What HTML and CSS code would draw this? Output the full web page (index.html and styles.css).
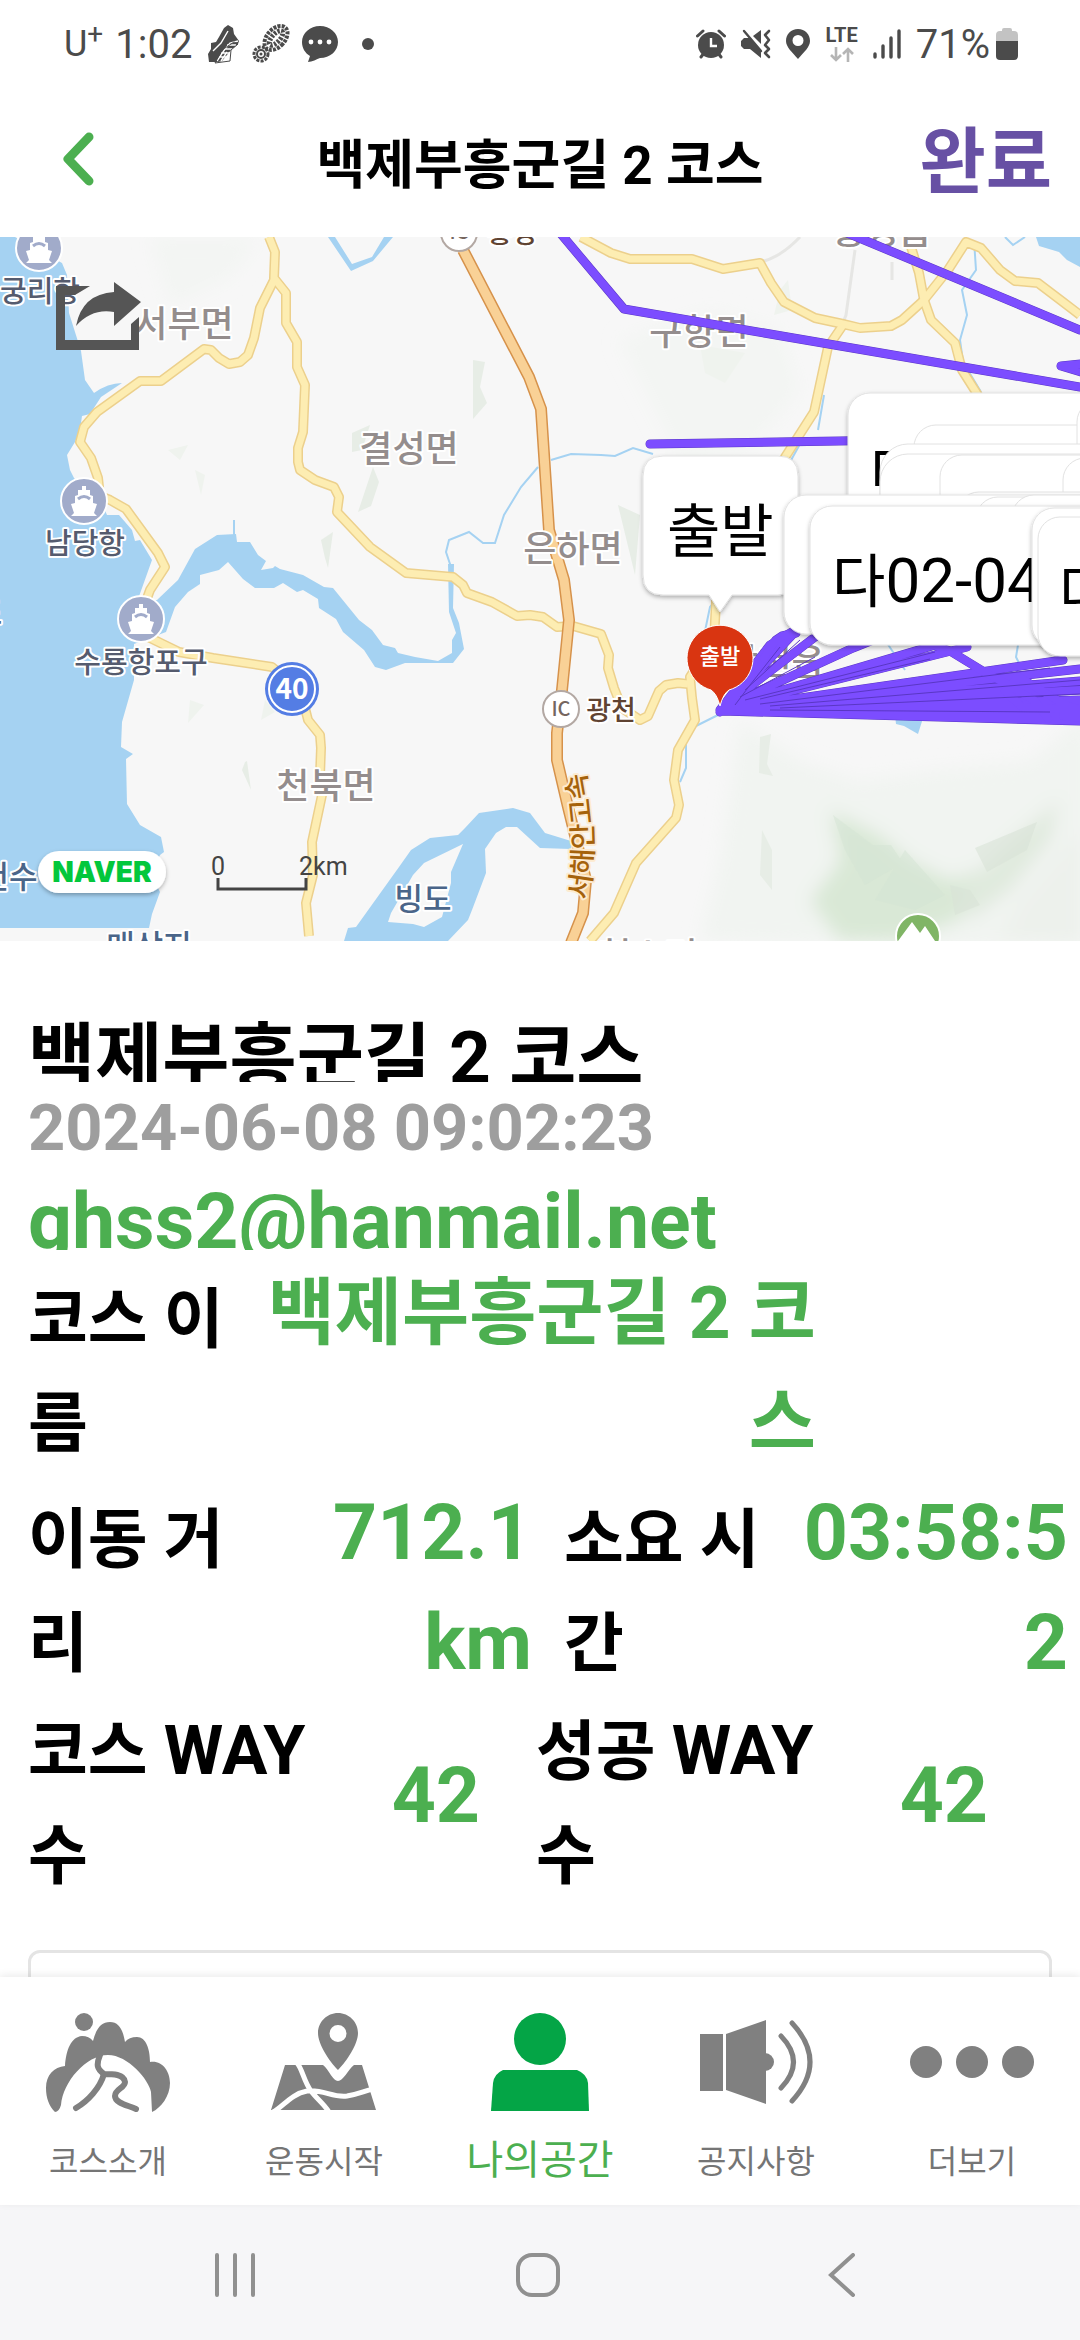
FILE: index.html
```html
<!DOCTYPE html>
<html lang="ko">
<head>
    <meta charset="UTF-8">
    <meta name="viewport" content="width=device-width, initial-scale=1.0">
    <title>백제부흥군길 2 코스</title>
    <link rel="stylesheet" href="styles.css">
</head>
<body>
    <div class="status-bar">
        <div class="status-left">
            <span class="carrier">U<sup>+</sup></span>
            <span class="clock">1:02</span>
            <svg class="shoe-icon" width="32" height="40" viewBox="0 0 32 40">
                <path d="M3 19l5-1 3-5 5-9 4-3 5 3 1 6 5 7-1 3-7 6-9 11-4 1H1l-1-8 3-5z" fill="#4b4b4b"/>
                <path d="M9 37l8-12 5-6 8-2M13 37l6-9M5 27l8-8 7-12M13 29h10M12 33h10M16 25h9M19 21h9" stroke="#fff" stroke-width="1.4" fill="none"/>
                <path d="M14 26l12-8 4 2-7 6-1 11-15 2z" fill="none" stroke="#4b4b4b" stroke-width="1"/>
            </svg>
            <svg width="38" height="40" viewBox="0 0 38 40">
                <ellipse cx="24" cy="14" rx="9" ry="14" transform="rotate(42 24 14)" fill="none" stroke="#4b4b4b" stroke-width="4" stroke-dasharray="3 1.2"/>
                <ellipse cx="24" cy="14" rx="4" ry="9" transform="rotate(42 24 14)" fill="none" stroke="#4b4b4b" stroke-width="5" stroke-dasharray="2.4 1.4"/>
                <circle cx="9" cy="30" r="7" fill="none" stroke="#4b4b4b" stroke-width="3" stroke-dasharray="3 1.2"/>
                <circle cx="9" cy="30" r="4" fill="none" stroke="#4b4b4b" stroke-width="2"/>
                <circle cx="9" cy="30" r="1.5" fill="#4b4b4b"/>
            </svg>
            <svg width="36" height="36" viewBox="0 0 36 36">
                <path d="M18 0c10 0 18 7 18 16s-8 16-18 16c-3 1-8 4-12 4l2-6C3 27 0 22 0 16 0 7 8 0 18 0z" fill="#4b4b4b"/>
                <circle cx="9" cy="16" r="2.4" fill="#fff"/><circle cx="18" cy="16" r="2.4" fill="#fff"/><circle cx="27" cy="16" r="2.4" fill="#fff"/>
            </svg>
            <span class="status-dot"></span>
        </div>
        <div class="status-right">
            <svg width="30" height="30" viewBox="0 0 30 30">
                <circle cx="15" cy="16" r="13" fill="#4b4b4b"/>
                <path d="M1.5 7L7 2M28.5 7L23 2M5 28l3-4M25 28l-3-4" stroke="#4b4b4b" stroke-width="3" stroke-linecap="round"/>
                <path d="M15 9v8h6" stroke="#fff" stroke-width="2.4" fill="none"/>
            </svg>
            <svg width="30" height="30" viewBox="0 0 30 30">
                <path d="M0 12l3-3h6L20 22v7L9 20H3l-3-3zM12 7l8-6v14z" fill="#4b4b4b"/>
                <path d="M3 2l17 20" stroke="#4b4b4b" stroke-width="2.4" stroke-linecap="round"/>
                <path d="M28 2l-4 4 4 5-4 5 4 4-4 4 4 4" stroke="#4b4b4b" stroke-width="2.6" fill="none" stroke-linecap="round" stroke-linejoin="round"/>
            </svg>
            <svg width="24" height="30" viewBox="0 0 24 30">
                <path d="M12 0c7 0 12 5 12 12 0 6-6 11-12 18C6 23 0 18 0 12 0 5 5 0 12 0zm0 6a5.500 5.500 0 1 0 0 11 5.500 5.500 0 0 0 0-11z" fill="#4b4b4b"/>
            </svg>
            <div class="lte">
                <span>LTE</span>
                <svg width="24" height="15" viewBox="0 0 24 15">
                    <path d="M6 0v13M1 8l5 5 5-5M18 15V2M13 7l5-5 5 5" stroke="#b5b5b5" stroke-width="2.6" fill="none"/>
                </svg>
            </div>
            <svg width="28" height="30" viewBox="0 0 28 30">
                <path d="M2 25v3M10 17v11M18 9v19M26 2v26" stroke="#4b4b4b" stroke-width="3.400" stroke-linecap="round"/>
            </svg>
            <div class="battery">
                <span>71%</span>
                <svg width="22" height="32" viewBox="0 0 22 32">
                    <path d="M6 2q0-2 2-2h6q2 0 2 2v1h2q4 0 4 4v6H0V7q0-4 4-4h2z" fill="#c3c3c3"/>
                    <path d="M0 13h22v15q0 4-4 4H4q-4 0-4-4z" fill="#4b4b4b"/>
                </svg>
            </div>
        </div>
    </div>

    <header class="app-header">
        <button class="back-button" aria-label="뒤로">
            <svg width="32" height="54" viewBox="0 0 32 54">
                <path d="M27 5L6 27l21 22" stroke="#4caf50" stroke-width="9" fill="none" stroke-linecap="round" stroke-linejoin="round"/>
            </svg>
        </button>
        <h1>백제부흥군길 2 코스</h1>
        <button class="done-button">완료</button>
    </header>

    <section class="map">
        <svg class="map-canvas" viewBox="0 237 1080 704" preserveAspectRatio="xMidYMid slice">
            <defs>
                <filter id="shadow" x="-20%" y="-20%" width="140%" height="140%">
                    <feDropShadow dx="0" dy="2" stdDeviation="2" flood-color="#000" flood-opacity="0.3"/>
                </filter>
                <filter id="soft" x="-20%" y="-20%" width="140%" height="140%">
                    <feGaussianBlur stdDeviation="9"/>
                </filter>
                <g id="port">
                    <circle r="23" fill="#a1abca" stroke="#fff" stroke-width="2"/>
                    <path d="M-2-15h4v4h4v5l3 1v7l4 1-3 9 3 3h-26l3-3-3-9 4-1v-7l3-1v-5h4z" fill="#fff"/>
                    <path d="M-6-2q6-5 12 0" stroke="#a1abca" stroke-width="3" fill="none"/>
                </g>
                <g id="roads" fill="none" stroke-linejoin="round">
                    <path d="M269 237l6 15-1 26 12 15v30l11 19v25l8 18-2 47-5 16v14l2 8 15 10 19 7 5 10-2 15 33 35 36 26 47 4 10 8 4 8 25 9 25 14 13-1 13 2 14 10 16-1 28 8 8 21-1 13 6 20 8 20 18 12 8-4 11-25 7-6 12-2 10 1"/>
                    <path d="M274 280l-14 28-6 30-6 17-8 7-11 2-10-6-8-8-7-1-43 32h-21l-43 31-13 15-4 15 11 16 7 20 2 18 10 4 16 9 32 44 7 14-15 23-9 25 3 20 35 17 34 6 59 9 20 17 13 24 3 12 12 15 1 13-1 27 2 20-10 47 1 33-7 28 3 33"/>
                    <path d="M581 237l30 16 19 6h62l31 10 37-6 11 20 13 19 31 16 28 6 17 4 31-2 11-6 22-20 24-30 18-28 15 6 19 22 15 11 23 2 25 19 17 13"/>
                    <path d="M908 237l11 36 5 27 7 20 24 23 7 27 19 30"/>
                    <path d="M843 325l-15 22-14 65-32 50-66 140-2 38-24 37 2 21 3 22-17 30-4 30 5 25-3 13-40 45-22 50-24 28"/>
                </g>
                <g id="track" fill="none" stroke-linecap="round" stroke-linejoin="round">
                    <path d="M561 234l63 75 456 78M840 230l240 100M650 444l250-4M1061 366l20-2M1061 366l20 6"/>
                    <path d="M720 710l50-65 25-15M720 712l75-80M722 708l93-71M722 708l131-60 20-8M722 708l245-61M722 708l210-62M724 709l339-49M724 709l356-40M724 709l356-28M724 710l356-20M724 710l356-10M724 711l356-4M722 711l358 10M724 711l335 4"/>
                    <path d="M764 658l6-10 6-8 6-4 14-3M933 645l17 6 36 22 19 10 30 18 13 18M1017 678l-12 13 17 16 60 3M1017 676l40 24 23 12M1060 704l20 5M1063 716l18 2"/>
                </g>
            </defs>

            <rect y="237" width="1080" height="704" fill="#f7f7f7"/>

            <!-- hills -->
            <g filter="url(#soft)">
                <path d="M700 941l20-80 20-140 60 40 60 20 70-10 100-10 60-50v240z" fill="#f1f4f1"/>
                <path d="M150 237h110l-30 40-60 30zM620 340l90-30 70 20 20 60-50 60-70 10z" fill="#f3f5f3"/>
                <path d="M830 810l50 25 30 25 40 20 30-10-20 50-60 21h-60l-30-40 30-40z" fill="#d9e8d6"/>
                <path d="M960 890l40-40 60-50-10 40-40 50-40 30z" fill="#e0eade"/>
                <path d="M1000 941l20-40 60-70v110z" fill="#edf1ec"/>
            </g>
            <path d="M833 815l40 30 18 0 12 18-38 22-20-35zM905 850l40 45-30 15-40-10z" fill="#d3e4d3" opacity="0.5"/>
            <path d="M975 848l62-26-10 28-40 22zM950 885l20 5 10 15-25 10z" fill="#d8e3d7" opacity="0.6"/>
            <path d="M760 737l11-3-4 30 6 12-14-3zM762 830l10 20v40l-12-15zM473 360l12 2-5 25 7 16-14 16zM358 512l15-45 6 15-8 24zM247 761l4 29-9-20 3-8zM352 433l18-8-8 25-10 2zM321 540l12-8-5 36-3-10zM618 505l22 10-5 60z" fill="#e7ede6"/>
            <path d="M780 290l8-10 4 30-18 5zM700 345l45 8-20 30-20-10zM168 450l20-5-8 15zM195 470l10 5-4 20zM190 700l14 5-16 18zM265 700l10 12-14 8z" fill="#eff3ee"/>

            <!-- water -->
            <path d="M0 237h15l47 26 5 12 2 38 12 38 4 29 9 13q14-10 28-10l-21 14-11 17-8 2-2 14-5 12-8 13 3 15 4 8 30 30 3 7h12l13 15 3 11 5-1 12 20-15 42 20-2 21-20 17-31 22-14 19-1 1 8h13l8 13 8 6-5 9 12-2 2-2 5 3 23 6 21 12 9 1 26 32 13 10 11 15 12 3 3 5 17 4 23 4 14-8v-13l4-7-7-21-1-48h6l-1 44 6 15 5 26-11 14h-48l-19 7-11-3-11-17-21-18-7-13-17-11-1-9-15-9-6 2-14-9-9 5h-19l-12-9-15-17-9 8-19 5v9l-12 8-13 15-9 25-32 12v36l-12 42-1 25 12 7-7 5 1 45 13 21 21 12 3 15-4 3-13 26 8 1 5 10-8 22-3 14H0z" fill="#a5d2f2"/>
            <path d="M344 941l4-13 8-1 43-60 12-17 19-12 28-3 7-7 14-15 34-5 17 5 15 20 26 8v8l-31-1-23-21h-11l-10 6-11 16 1 24-14 37-4 10-20 21zM463 844l-39 19-11 12-22 38-3 9 25 2 11 3 18-10 9-34v-11z" fill="#a5d2f2" fill-rule="evenodd"/>
            <path d="M328 237l23 34 22-10 20-24h-9l-12 20-20 7-17-27zM895 715h29l-6 19-14-8-8-2zM1036 237h44v30l-13-7-8-8-20-6z" fill="#a5d2f2"/>
            <path d="M234 520v24M452 570l-6-18 3-12 20-8 14 11h12l9-28 17-28 17-20M551 460l20-6 30 1 14 1 18-8 20 6M700 655l10-48 12-14M694 727l28-14M686 740v28l-6 14M974 240l2 30-14 20 5 25-7 25 3 22 18 30M1005 237l8 8 12-8M790 462l10-18M818 430l6-35M885 640l20 30M1018 645l-2 12 6 12" stroke="#a5d2f2" stroke-width="2" fill="none"/>
            <path d="M760 262q20-4 40-25M855 250l-9 65-4 10M892 262v18" stroke="#e6e6e4" stroke-width="3" fill="none"/>

            <use href="#roads" stroke="#ecd08c" stroke-width="10"/>
            <use href="#roads" stroke="#fdedb2" stroke-width="7"/>
            <path d="M463 250l66 127 12 32 8 121 15 50 5 40-7 70-5 43v27l11 47 18 73-3 33-12 30" fill="none" stroke="#d6924b" stroke-width="12"/>
            <path d="M463 250l66 127 12 32 8 121 15 50 5 40-7 70-5 43v27l11 47 18 73-3 33-12 30" fill="none" stroke="#f9d196" stroke-width="9"/>

            <g class="district">
                <text x="184" y="337">서부면</text>
                <text x="409" y="462">결성면</text>
                <text x="573" y="562">은하면</text>
                <text x="699" y="345">구향면</text>
                <text x="326" y="799">천북면</text>
                <text x="882" y="244">홍성읍</text>
                <text x="775" y="675">광천읍</text>
                <text x="648" y="969">청소면</text>
            </g>
            <g class="port-label">
                <text x="40" y="302">궁리항</text>
                <text x="85" y="554">남당항</text>
                <text x="141" y="673">수룡항포구</text>
            </g>
            <g class="sea-label">
                <text x="9" y="888">천수</text>
                <text x="423" y="910">빙도</text>
                <text x="149" y="957">매상지</text>
                <text x="-12" y="624">도</text>
            </g>
            <use href="#port" x="39" y="248"/>
            <use href="#port" x="84" y="501"/>
            <use href="#port" x="141" y="619"/>

            <circle cx="292" cy="689" r="27" fill="#547de4"/>
            <circle cx="292" cy="689" r="23" fill="none" stroke="#fff" stroke-width="2"/>
            <text class="route-number" x="292" y="699">40</text>

            <g class="ic">
                <circle cx="459" cy="233" r="18"/>
                <text x="459" y="239">IC</text>
                <circle cx="561" cy="709" r="18"/>
                <text x="561" y="716">IC</text>
            </g>
            <g class="ic-label">
                <text x="611" y="720">광천</text>
                <text x="512" y="243">홍성</text>
            </g>
            <path id="highway-line" d="M588 900q12-62-5-136" fill="none"/>
            <text class="highway-label"><textPath href="#highway-line">서해안고속</textPath></text>

            <use href="#track" stroke="#5a37c4" stroke-width="9"/>
            <use href="#track" stroke="#7c4dff" stroke-width="8"/>
            <path d="M745 690l55-50M740 697l75-40M745 700l190-48M760 699l170-40M760 704l290-36M770 706l310-26M780 708l300-14M770 710l280 2M735 705l15-20 30-38" stroke="#5a37c4" stroke-width="1" fill="none"/>

            <circle cx="918" cy="936" r="22" fill="#80b566" stroke="#fff" stroke-width="2"/>
            <path d="M898 941l14-19 8 11 5-7 10 15z" fill="#fff"/>

            <!-- start marker -->
            <path d="M720 706q-3-12-9-16a33 33 0 1 1 18 0q-6 4-9 16z" fill="#d93511" stroke="#fff" stroke-width="1"/>
            <text class="marker-text" x="720" y="664">출발</text>

            <!-- way point callouts -->
            <g class="callout" filter="url(#shadow)">
                <path d="M663 456h115q20 0 20 20v99q0 20-20 20h-46l-12 17-11-17h-46q-20 0-20-20v-99q0-20 20-20z"/>
                <rect x="848" y="393" width="300" height="140" rx="22"/>
            </g>
            <text class="callout-text" x="870" y="494">다</text>
            <g class="callout">
                <rect x="914" y="425" width="300" height="140" rx="22"/>
                <rect x="1077" y="400" width="300" height="140" rx="22"/>
                <rect x="880" y="444" width="300" height="140" rx="28"/>
                <rect x="880" y="454" width="300" height="140" rx="28"/>
                <rect x="940" y="455" width="300" height="140" rx="22"/>
                <rect x="1063" y="458" width="300" height="140" rx="22"/>
                <rect x="957" y="492" width="300" height="140" rx="22"/>
            </g>
            <g class="callout" filter="url(#shadow)">
                <rect x="784" y="495" width="320" height="139" rx="22"/>
            </g>
            <g class="callout">
                <rect x="976" y="497" width="300" height="130" rx="22"/>
                <rect x="1012" y="495" width="300" height="130" rx="22"/>
            </g>
            <g class="callout" filter="url(#shadow)">
                <rect x="810" y="506" width="320" height="139" rx="22"/>
            </g>
            <text class="callout-text" x="832" y="602">다<tspan class="callout-number">02-04</tspan></text>
            <g class="callout" filter="url(#shadow)">
                <rect x="1032" y="508" width="300" height="139" rx="22"/>
                <rect x="1038" y="517" width="300" height="139" rx="22"/>
            </g>
            <text class="callout-text" x="1059" y="612">다</text>
            <text class="callout-text" x="667" y="552">출발</text>

            <!-- scale bar and logo -->
            <path d="M218 878v11h88v-11" fill="none" stroke="#444" stroke-width="3"/>
            <text class="scale-text" x="211" y="875">0</text>
            <text class="scale-text" x="299" y="875">2km</text>
            <rect x="38" y="851" width="128" height="42" rx="21" fill="#fff" filter="url(#shadow)"/>
            <text class="naver" x="102" y="882">NAVER</text>
        </svg>
        <button class="share-button" aria-label="공유">
            <svg width="86" height="68" viewBox="0 0 86 68">
                <path d="M0 4h34l-15 9H9v45h66V42l8-7v33H0z" fill="#555"/>
                <path d="M20 44Q26 12 58 10V0l27 20-27 24V30Q36 26 20 44z" fill="#555"/>
            </svg>
        </button>
    </section>

    <main class="record">
        <h2 class="record-title">백제부흥군길 2 코스</h2>
        <time class="record-date">2024-06-08 09:02:23</time>
        <p class="record-user">ghss2@hanmail.net</p>

        <dl class="row row-name">
            <dt>코스 이름</dt>
            <dd>백제부흥군길 2 코스</dd>
        </dl>
        <dl class="row row-move">
            <dt>이동 거리</dt>
            <dd class="number">712.1 km</dd>
            <dt>소요 시간</dt>
            <dd class="number time">03:58:52</dd>
        </dl>
        <dl class="row row-way">
            <dt>코스 <span class="latin">WAY</span> 수</dt>
            <dd class="number">42</dd>
            <dt>성공 <span class="latin">WAY</span> 수</dt>
            <dd class="number">42</dd>
        </dl>
        <div class="card"></div>
    </main>

    <nav class="tab-bar">
        <a href="#course">
            <svg width="124" height="100" viewBox="0 0 124 100">
                <circle cx="38" cy="10" r="9" fill="#808080"/>
                <path d="M9 100C3 94 0 86 0 76 0 63 8 55 19 54 20 38 25 25 36 24q7 0 11 5C50 17 55 10 64 10s13 8 15 20q4-5 12-5c9 0 13 12 13 25 12-2 20 9 20 21 0 13-9 25-18 29l-1-20C103 68 82 43 62 43 40 43 17 70 15 93q-2 7-6 7z" fill="#808080"/>
                <path d="M54 43c-4 10-3 14 4 19-4 14-16 27-28 34M57 62c10 0 21 0 22 8 0 6-10 7-10 14s12 9 21 13" fill="none" stroke="#808080" stroke-width="6" stroke-linecap="round"/>
            </svg>
            <span>코스소개</span>
        </a>
        <a href="#start">
            <svg width="106" height="98" viewBox="0 0 106 98">
                <path d="M14 52h38c6 5 10 16 15 16s10-11 16-16h8l14 45H0z" fill="#808080"/>
                <path d="M26 50c5 5 7 19 14 28 5 7 13 13 18 21M2 99c10-5 18-18 34-21 16-2 26 7 40 5 12-2 17-5 26-7" fill="none" stroke="#fff" stroke-width="5"/>
                <path d="M67 0c11 0 20 9 20 20S76 48 67 57C58 48 47 31 47 20S56 0 67 0zm0 12a8.500 8.500 0 1 0 0 17 8.500 8.500 0 0 0 0-17z" fill="#808080" fill-rule="evenodd"/>
            </svg>
            <span>운동시작</span>
        </a>
        <a href="#my" class="active">
            <svg width="98" height="98" viewBox="0 0 98 98">
                <circle cx="49" cy="26" r="26" fill="#04a546"/>
                <path d="M12 57h74q10 4 11 13l1 28H0l2-28q1-9 10-13z" fill="#04a546"/>
            </svg>
            <span>나의공간</span>
        </a>
        <a href="#notice">
            <svg width="113" height="84" viewBox="0 0 113 84">
                <path d="M0 14h23v57H0zM26 14L66 0v84L26 70z" fill="#808080"/>
                <circle cx="65" cy="42" r="9" fill="#808080"/>
                <path d="M81 16q25 26 0 52M92 3q36 39 0 78" fill="none" stroke="#808080" stroke-width="5" stroke-linecap="round"/>
            </svg>
            <span>공지사항</span>
        </a>
        <a href="#more">
            <svg width="124" height="32" viewBox="0 0 124 32">
                <circle cx="16" cy="16" r="16" fill="#808080"/>
                <circle cx="62" cy="16" r="16" fill="#808080"/>
                <circle cx="108" cy="16" r="16" fill="#808080"/>
            </svg>
            <span>더보기</span>
        </a>
    </nav>

    <div class="system-bar">
        <button aria-label="최근 앱">
            <svg width="44" height="44" viewBox="0 0 44 44"><path d="M4 2v40M22 2v40M40 2v40"/></svg>
        </button>
        <button aria-label="홈">
            <svg width="44" height="44" viewBox="0 0 44 44"><rect x="2" y="2" width="40" height="40" rx="14"/></svg>
        </button>
        <button aria-label="이전">
            <svg width="44" height="44" viewBox="0 0 44 44"><path d="M34 2L12 22l22 20"/></svg>
        </button>
    </div>
</body>
</html>
```

FILE: styles.css
```css
* {
    box-sizing: border-box;
}
body {
    display: flex;
    flex-direction: column;
    height: 100vh;
    margin: 0;
    background-color: #fff;
    color: #000;
    font-family: Roboto, "Noto Sans CJK KR", sans-serif;
    overflow: hidden;
}
button {
    border: none;
    background: none;
    padding: 0;
    font-family: inherit;
    cursor: pointer;
}
svg {
    display: block;
    flex-shrink: 0;
}

/* status bar */
.status-bar {
    display: flex;
    justify-content: space-between;
    align-items: center;
    height: 88px;
    flex-shrink: 0;
    padding: 0 62px 0 64px;
    color: #4b4b4b;
    font-size: 40px;
}
.status-left,
.status-right {
    display: flex;
    align-items: center;
}
.status-left {
    gap: 12px;
}
.status-right {
    gap: 15px;
}
.carrier {
    font-size: 36px;
}
.carrier sup {
    font-size: 28px;
    line-height: 0;
}
.shoe-icon {
    margin-left: 4px;
}
.status-dot {
    width: 12px;
    height: 12px;
    margin-left: 12px;
    border-radius: 50%;
    background-color: #4b4b4b;
}
.lte {
    display: flex;
    flex-direction: column;
    align-items: center;
    gap: 4px;
    font-size: 20px;
    font-weight: bold;
    line-height: 16px;
}
.battery {
    display: flex;
    align-items: center;
    gap: 6px;
}

/* header */
.app-header {
    display: grid;
    grid-template-columns: 160px 1fr 160px;
    align-items: center;
    height: 149px;
    flex-shrink: 0;
    padding: 0 28px;
}
.app-header h1 {
    margin: 0 0 4px;
    font-size: 53px;
    text-align: center;
}
.back-button {
    justify-self: start;
    padding-left: 34px;
    margin-bottom: 8px;
}
.done-button {
    justify-self: end;
    color: #6750a4;
    font-size: 72px;
    font-weight: bold;
    line-height: 80px;
}

/* map */
.map {
    position: relative;
    height: 704px;
    flex-shrink: 0;
}
.map-canvas {
    width: 100%;
    height: 100%;
}
.share-button {
    position: absolute;
    top: 45px;
    left: 56px;
}
.map text {
    font-family: "Noto Sans CJK KR", sans-serif;
    font-weight: 500;
    text-anchor: middle;
    paint-order: stroke;
    stroke: #fff;
    stroke-width: 4px;
    stroke-linejoin: round;
}
.map .district text {
    font-size: 36px;
    fill: #948d8d;
}
.map .port-label text {
    font-size: 29px;
    fill: #555b6e;
}
.map .sea-label text {
    font-size: 31px;
    fill: #4a6589;
}
.map .route-number {
    font-size: 28px;
    font-weight: 700;
    fill: #fff;
    stroke: none;
}
.ic circle {
    fill: #fff;
    stroke: #b3a8a3;
    stroke-width: 2px;
}
.map .ic text {
    font-size: 20px;
    fill: #75665f;
}
.map .ic-label text {
    font-size: 27px;
    fill: #5f4332;
}
.map .highway-label {
    font-size: 28px;
    fill: #a5620b;
    stroke: #fdebd0;
    text-anchor: start;
}
.map .marker-text {
    font-size: 22px;
    fill: #fff;
    stroke: none;
}
.callout path,
.callout rect {
    fill: #fff;
    stroke: #e2e2e2;
    stroke-width: 1px;
}
.map .callout-text {
    font-family: Roboto, "Noto Sans CJK KR", sans-serif;
    font-size: 58px;
    font-weight: 400;
    text-anchor: start;
    stroke: none;
}
.callout-number {
    font-size: 62px;
}
.map .scale-text {
    font-family: Roboto, sans-serif;
    font-size: 25px;
    font-weight: 400;
    fill: #444;
    text-anchor: start;
    stroke: none;
}
.map .naver {
    font-family: Inter, sans-serif;
    font-size: 28px;
    font-weight: 900;
    fill: #03c73c;
    stroke: none;
}

/* record */
.record {
    flex: 1;
    min-height: 0;
    overflow: hidden;
    padding: 77px 0 0;
}
.record-title {
    height: 64px;
    margin: 0 28px;
    font-size: 73px;
    line-height: 80px;
    overflow: hidden;
}
.record-date {
    display: block;
    margin: 8px 28px 16px;
    color: #9e9e9e;
    font-size: 65px;
    font-weight: bold;
    line-height: 76px;
}
.record-user {
    height: 68px;
    margin: 0 28px 8px;
    color: #4caf50;
    font-size: 77px;
    font-weight: bold;
    line-height: 80px;
    overflow: hidden;
}
.row {
    display: grid;
    align-items: center;
    margin: 0;
    padding-left: 28px;
    font-weight: bold;
}
.row dt {
    padding-top: 8px;
    font-size: 65px;
    line-height: 104px;
}
.row dd {
    margin: 0;
    color: #4caf50;
    font-size: 73px;
    line-height: 110px;
    text-align: right;
}
.row .latin {
    font-size: 68px;
    line-height: 1;
}
.row .number {
    font-size: 77px;
}
.row-name {
    grid-template-columns: 200px 1fr;
    padding-right: 264px;
    column-gap: 24px;
}
.row-move {
    grid-template-columns: 200px 1fr 200px 1fr;
    padding-right: 12px;
    column-gap: 32px;
}
.row-move .number {
    padding-left: 36px;
}
.row-move .time {
    padding-left: 0;
    word-break: break-all;
}
.row-way {
    grid-template-columns: 3fr 2fr 3fr 2fr;
    padding-right: 36px;
}
.row-way dt {
    padding-top: 2px;
}
.row-way .number {
    padding: 0 56px 14px 0;
}
.card {
    height: 200px;
    margin: 42px 28px 0;
    border: 3px solid #e4e4e4;
    border-radius: 12px;
}

/* tab bar */
.tab-bar {
    position: relative;
    display: grid;
    grid-template-columns: repeat(5, 1fr);
    height: 228px;
    flex-shrink: 0;
    background-color: #fff;
    box-shadow: 0 -2px 8px rgba(0, 0, 0, 0.08);
}
.tab-bar a {
    display: grid;
    grid-template-rows: 100px 1fr;
    justify-items: center;
    align-items: center;
    padding: 35px 0 0;
    color: #757575;
    font-size: 32px;
    text-decoration: none;
}
.tab-bar .active {
    padding-bottom: 4px;
    color: #4caf50;
    font-size: 40px;
}

/* system navigation */
.system-bar {
    display: grid;
    grid-template-columns: repeat(3, 1fr);
    justify-items: center;
    height: 135px;
    flex-shrink: 0;
    padding: 4px 88px 0 84px;
    background-color: #f6f6f8;
}
.system-bar path,
.system-bar rect {
    fill: none;
    stroke: #909090;
    stroke-width: 4px;
    stroke-linecap: round;
}
```
